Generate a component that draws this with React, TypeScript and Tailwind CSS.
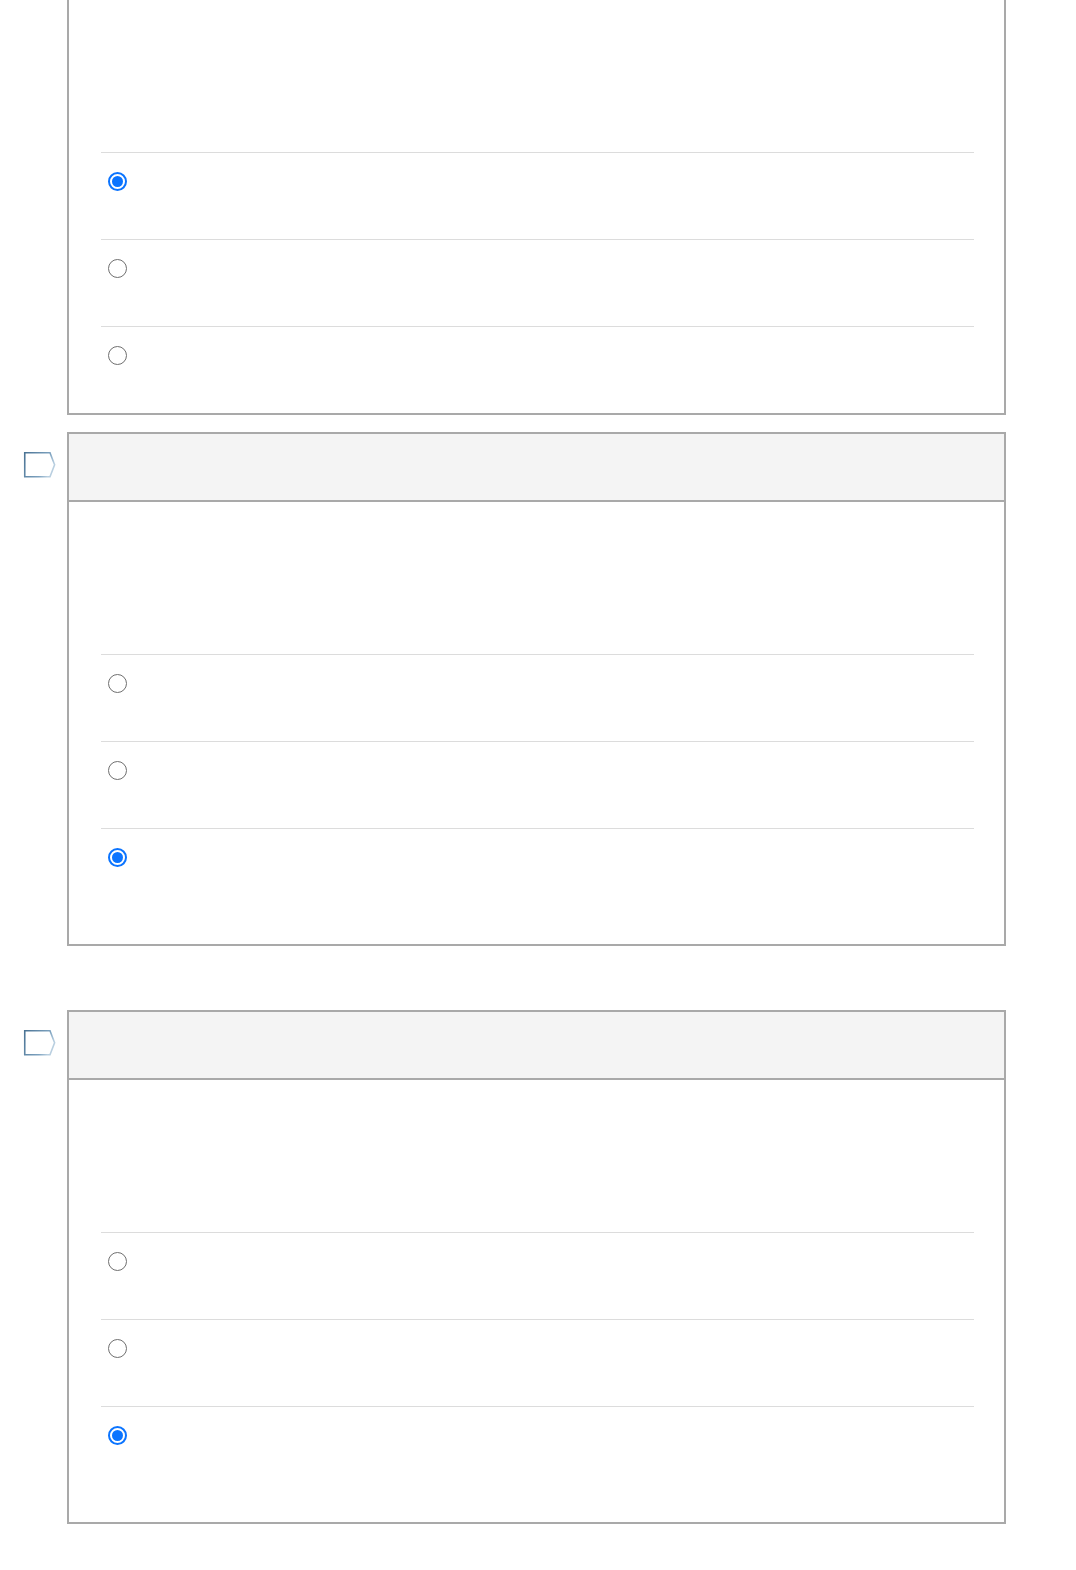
const cards = [
  { flag: false, top: '-mt-[71px]', selected: 0, padBottom: false, intro: 'h-[153px]' },
  { flag: true, top: 'mt-[17px]', selected: 2, padBottom: true, intro: 'h-[152px]' },
  { flag: true, top: 'mt-[64px]', selected: 2, padBottom: true, intro: 'h-[152px]' },
]

function Flag() {
  return (
    <svg width="34" height="28" viewBox="0 0 34 28" className="block">
      <defs>
        <linearGradient id="flagStroke" x1="0" y1="0" x2="1" y2="0.4">
          <stop offset="0" stopColor="#4a7394" />
          <stop offset="0.75" stopColor="#7ea3c0" />
          <stop offset="1" stopColor="#b9cfe0" />
        </linearGradient>
      </defs>
      <path d="M1.75 1.75 H27 L31.6 13.75 L27 25.75 H1.75 Z" fill="#fff" stroke="url(#flagStroke)" strokeWidth="1.6" strokeLinejoin="miter" />
    </svg>
  )
}

function Radio({ on }: { on: boolean }) {
  if (on) {
    return (
      <span className="flex h-[19px] w-[19px] items-center justify-center rounded-full border-[2px] border-[#0b74ff] bg-white">
        <span className="h-[11.5px] w-[11.5px] rounded-full bg-[#0b74ff]" />
      </span>
    )
  }
  return <span className="block h-[19px] w-[19px] rounded-full border-[1.5px] border-[#6f6f6f] bg-white" />
}

function Card({ selected, padBottom, intro }: { selected: number; padBottom: boolean; intro: string }) {
  return (
    <div className="w-[939px] border-2 border-[#a9a9a9] bg-white">
      <div className="h-[68px] border-b-2 border-[#a9a9a9] bg-[#f4f4f4]" />
      <div className={`pl-[32px] pr-[30px] ${padBottom ? 'pb-[29px]' : 'pb-0'}`}>
        <div className={intro} />
        {[0, 1, 2].map((i) => (
          <label key={i} className="flex h-[87px] items-start border-t border-[#dcdcdc] pl-[7px] pt-[19px]">
            <Radio on={i === selected} />
          </label>
        ))}
      </div>
    </div>
  )
}

export default function App() {
  return (
    <div className="min-h-[1570px] overflow-hidden bg-white font-['Liberation_Sans',sans-serif]">
      {cards.map((c, idx) => (
        <div key={idx} className={`flex ${c.top}`}>
          <div className="w-[67px] shrink-0 pl-[23px] pt-[19px]">
            {c.flag && <Flag />}
          </div>
          <Card selected={c.selected} padBottom={c.padBottom} intro={c.intro} />
        </div>
      ))}
    </div>
  )
}
